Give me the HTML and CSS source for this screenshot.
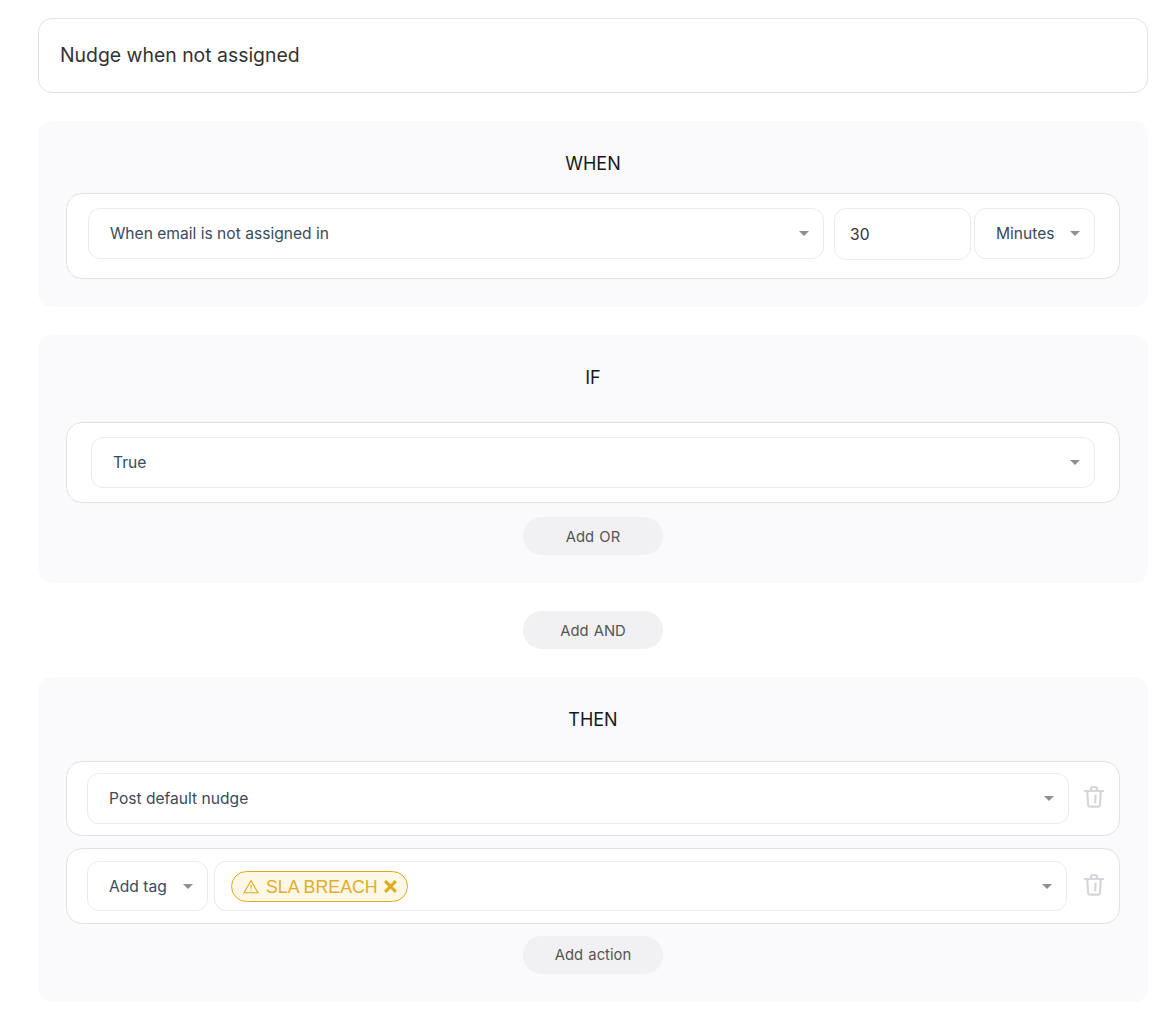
FILE: index.html
```html
<!DOCTYPE html>
<html lang="en">
<head>
<meta charset="utf-8">
<title>Nudge when not assigned</title>
<link rel="stylesheet" href="styles.css">
</head>
<body>
<main class="page">
  <div class="title-box">Nudge when not assigned</div>

  <section class="panel panel-when">
    <h2 class="panel-title">WHEN</h2>
    <div class="rule rule-when">
      <div class="select grow"><span>When email is not assigned in</span><i class="caret"></i></div>
      <div class="number">30</div>
      <div class="select unit"><span>Minutes</span><i class="caret"></i></div>
    </div>
  </section>

  <section class="panel panel-if">
    <h2 class="panel-title">IF</h2>
    <div class="rule rule-if">
      <div class="select grow"><span>True</span><i class="caret"></i></div>
    </div>
    <button class="pill pill-in">Add OR</button>
  </section>

  <button class="pill pill-and">Add AND</button>

  <section class="panel panel-then">
    <h2 class="panel-title">THEN</h2>
    <div class="rule rule-then">
      <div class="select grow"><span>Post default nudge</span><i class="caret"></i></div>
      <svg class="trash" viewBox="0 0 20 22" width="20" height="22" aria-hidden="true"><path d="M1 5h18M7 5V3.200C7 2 7.800 1.200 9 1.200h2c1.200 0 2 .8 2 2V5M3.200 5l.9 13.500c.1 1.300 1 2.200 2.300 2.200h7.200c1.300 0 2.200-.9 2.300-2.200L16.800 5M11.500 9.500l-.3 7" fill="none" stroke="#d5d6da" stroke-width="2.200" stroke-linecap="round" stroke-linejoin="round"/></svg>
    </div>
    <div class="rule rule-then rule-tag">
      <div class="select unit tag-type"><span>Add tag</span><i class="caret"></i></div>
      <div class="select grow tag-select">
        <span class="tag"><svg class="warn" viewBox="0 0 16 15" width="16" height="15" aria-hidden="true"><path d="M8 1.500 15 13.800H1Z" fill="none" stroke="#e0a91e" stroke-width="1.100" stroke-linejoin="round"/><path d="M8 5.800v4M8 11.200v1" fill="none" stroke="#e0a91e" stroke-width="1.100"/></svg><span class="tag-label">SLA BREACH</span><svg class="close" viewBox="0 0 14 14" width="15" height="15" aria-hidden="true"><path d="M2 2l10 10M12 2 2 12" fill="none" stroke="#e0a91e" stroke-width="2.800"/></svg></span>
        <i class="caret"></i>
      </div>
      <svg class="trash" viewBox="0 0 20 22" width="20" height="22" aria-hidden="true"><path d="M1 5h18M7 5V3.200C7 2 7.800 1.200 9 1.200h2c1.200 0 2 .8 2 2V5M3.200 5l.9 13.500c.1 1.300 1 2.200 2.300 2.200h7.200c1.300 0 2.200-.9 2.300-2.200L16.800 5M11.500 9.500l-.3 7" fill="none" stroke="#d5d6da" stroke-width="2.200" stroke-linecap="round" stroke-linejoin="round"/></svg>
    </div>
    <button class="pill pill-action">Add action</button>
  </section>
</main>
</body>
</html>
```

FILE: styles.css
```css
* { box-sizing: border-box; }

html, body {
  margin: 0;
  background: #fff;
}

body {
  font-family: Inter, "Liberation Sans", sans-serif;
  color: #334155;
}

.page {
  display: flex;
  flex-direction: column;
  width: 1176px;
  padding: 18px 28px 17px 38px;
}

.title-box {
  height: 75px;
  display: flex;
  align-items: center;
  padding: 0 0 2px 21px;
  border: 1px solid #e3e3e6;
  border-radius: 14px;
  font-size: 19.4px;
  color: #333;
  margin-bottom: 28px;
}

.panel {
  display: flex;
  flex-direction: column;
  background: #fafafc;
  border-radius: 14px;
  padding: 0 28px;
}

.panel-title {
  margin: 0;
  font-size: 18px;
  font-weight: 400;
  line-height: 22px;
  color: #18181b;
  text-align: center;
}

.panel-when { height: 186px; padding-top: 32px; margin-bottom: 28px; }
.panel-when .panel-title { margin-bottom: 18px; }

.panel-if { height: 248px; padding-top: 32px; }
.panel-if .panel-title { margin-bottom: 33px; }

.panel-then { height: 325px; padding-top: 32px; }
.panel-then .panel-title { margin-bottom: 30px; }

.rule {
  display: flex;
  align-items: center;
  background: #fff;
  border: 1px solid #e3e3e6;
  border-radius: 16px;
}

.rule-when { height: 86px; padding: 14px 24px 0 21px; align-items: flex-start; }
.rule-if { height: 81px; padding: 0 24px 1px; }
.rule-then { height: 75px; padding: 0 15px 0 20px; }
.rule-tag { height: 76px; margin-top: 12px; }

.select {
  display: flex;
  align-items: center;
  justify-content: space-between;
  height: 51px;
  padding: 0 14px 0 21px;
  background: #fff;
  border: 1px solid #ebebee;
  border-radius: 12px;
  font-size: 15.6px;
  color: #3b4a5c;
}

.grow { flex: 1 1 0; min-width: 0; }

.unit { width: 121px; flex: none; }

.rule-when .grow { margin-right: 10px; }

.number {
  flex: none;
  width: 137px;
  height: 52px;
  margin-right: 3px;
  padding-left: 15px;
  display: flex;
  align-items: center;
  border: 1px solid #ebebee;
  border-radius: 12px;
  font-size: 15.6px;
  color: #333;
}

.caret {
  flex: none;
  width: 0;
  height: 0;
  border-left: 5px solid transparent;
  border-right: 5px solid transparent;
  border-top: 5px solid #8f8f93;
}

.trash {
  flex: none;
  margin: 0 0 3px 15px;
}

.tag-type, .tag-select { height: 50px; }
.tag-type { margin-right: 6px; }
.tag-select { padding-left: 16px; }
.rule-tag .trash { margin: 0 0 2px 17px; }

.tag {
  display: inline-flex;
  align-items: center;
  height: 31px;
  padding: 0 9px 0 11px;
  background: #fdf7e6;
  border: 1px solid #e0a91e;
  border-radius: 16px;
  font-family: "Liberation Sans", Arial, sans-serif;
  font-size: 17.8px;
  color: #e2ad2c;
}

.tag-label { padding-top: 2px; }

.warn { margin-right: 7px; }
.close { margin-left: 5px; }

.pill {
  align-self: center;
  flex: none;
  width: 140px;
  height: 38px;
  padding: 1px 0 0;
  border: 0;
  border-radius: 19px;
  background: #f1f1f3;
  font-family: inherit;
  font-size: 14.8px;
  word-spacing: 1px;
  color: #555;
}

.pill-in { margin-top: 14px; }
.pill-and { margin: 28px 0; }
.pill-action { margin-top: 12px; padding-top: 0; }
```
